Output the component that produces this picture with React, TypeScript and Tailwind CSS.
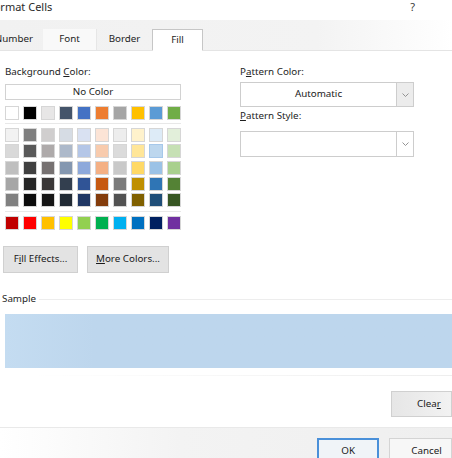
import React from 'react';

const themeRow = ['#FFFFFF', '#000000', '#E7E6E6', '#44546A', '#4472C4', '#ED7D31', '#A5A5A5', '#FFC000', '#5B9BD5', '#70AD47'];

const tintRows = [
  ['#F2F2F2', '#7F7F7F', '#D0CECE', '#D6DCE4', '#D9E1F2', '#FCE4D6', '#EDEDED', '#FFF2CC', '#DDEBF7', '#E2EFDA'],
  ['#D9D9D9', '#595959', '#AEAAAA', '#ADB9CA', '#B4C6E7', '#F8CBAD', '#DBDBDB', '#FFE699', '#BDD7EE', '#C6E0B4'],
  ['#BFBFBF', '#404040', '#767171', '#8497B0', '#8EA9DB', '#F4B084', '#C9C9C9', '#FFD966', '#9BC2E6', '#A9D08E'],
  ['#A6A6A6', '#262626', '#3B3838', '#333F4F', '#305496', '#C65911', '#7B7B7B', '#BF8F00', '#2F75B5', '#548235'],
  ['#808080', '#0D0D0D', '#161616', '#222B35', '#203764', '#833C0C', '#525252', '#806000', '#1F4E78', '#375623'],
];

const standardRow = ['#C00000', '#FF0000', '#FFC000', '#FFFF00', '#92D050', '#00B050', '#00B0F0', '#0070C0', '#002060', '#7030A0'];

const Swatch: React.FC<{ color: string; selected?: boolean }> = ({ color, selected }) => (
  <div
    className={
      selected
        ? 'w-[14px] h-[14px] border border-[#a6c8ea]'
        : 'w-[14px] h-[14px] border border-[#d6d6d6]'
    }
    style={{ backgroundColor: color }}
  />
);

const SwatchRow: React.FC<{ colors: string[]; selectedIndex?: number }> = ({ colors, selectedIndex }) => (
  <div className="flex gap-[4px]">
    {colors.map((c, i) => (
      <Swatch key={i} color={c} selected={i === selectedIndex} />
    ))}
  </div>
);

const Chevron: React.FC = () => (
  <svg width="7" height="4" viewBox="0 0 7 4" fill="none">
    <path d="M0.5 0.5 L3.5 3.5 L6.5 0.5" stroke="#888" strokeWidth="0.9" />
  </svg>
);

const Dropdown: React.FC<{ value?: string; shadedArrow?: boolean; className?: string }> = ({ value, shadedArrow, className }) => (
  <div className={'flex w-[174px] border border-[#cdcdcd] bg-white ' + (className || '')}>
    <div className="flex-1 flex items-center justify-center text-[#1a1a1a]">{value}</div>
    <div
      className={
        shadedArrow
          ? 'w-[17px] flex items-center justify-center bg-[#ececec] border-l border-[#cdcdcd]'
          : 'w-[17px] flex items-center justify-center bg-white border-l border-[#cdcdcd]'
      }
    >
      <Chevron />
    </div>
  </div>
);

const GrayButton: React.FC<{ children: React.ReactNode; className?: string }> = ({ children, className }) => (
  <div
    className={
      'flex items-center justify-center bg-[#e3e3e3] border border-[#d0d0d0] text-[#1a1a1a] ' +
      (className || '')
    }
  >
    {children}
  </div>
);

export default function App() {
  return (
    <div
      className="w-[452px] h-[458px] bg-white overflow-hidden text-[9.8px] text-[#1e1e1e] flex flex-col"
      style={{ fontFamily: '"Noto Sans", "Open Sans", sans-serif' }}
    >
      {/* Title bar */}
      <div className="shrink-0 h-[20px] flex justify-between items-start text-[11px] leading-[13px]">
        <div className="ml-[-12px] text-[#2b2b2b]">Format Cells</div>
        <div className="mr-[37px] text-[#3a3a3a]">?</div>
      </div>

      {/* Tab strip */}
      <div className="shrink-0 h-[31px] flex items-end bg-gradient-to-r from-[#f1f1f1] via-[#f3f3f3] via-70% to-white border-b border-[#e4e4e4]">
        <div className="w-[43px] h-[21px] flex items-center justify-end pr-[10px]">
          <span className="whitespace-nowrap">Number</span>
        </div>
        <div className="w-[53px] h-[21px] flex items-center justify-center bg-[#f9f9f9]">Font</div>
        <div className="w-[56px] h-[21px] flex items-center justify-center border-l border-[#e6e6e6]">Border</div>
        <div className="w-[51px] h-[22px] mb-[-1px] flex items-center justify-center bg-white border border-[#c6c6c6] border-b-white">
          Fill
        </div>
      </div>

      {/* Main area */}
      <div className="shrink-0 flex mt-[13px]">
        {/* Left column */}
        <div className="ml-[5px] w-[176px] flex flex-col">
          <div className="h-[16px] leading-[16px]">
            Background <u>C</u>olor:
          </div>
          <div className="mt-[4px] h-[16px] border border-[#d2d2d2] flex items-center justify-center">
            No Color
          </div>
          <div className="mt-[6px]">
            <SwatchRow colors={themeRow} />
          </div>
          <div className="mt-[3px] h-px bg-[#e8e8e8]" />
          <div className="mt-[4px] flex flex-col gap-[2.25px]">
            {tintRows.map((row, i) => (
              <SwatchRow key={i} colors={row} selectedIndex={i === 1 ? 8 : undefined} />
            ))}
          </div>
          <div className="mt-[4px] h-px bg-[#e8e8e8]" />
          <div className="mt-[4px]">
            <SwatchRow colors={standardRow} />
          </div>
        </div>

        {/* Right column */}
        <div className="ml-[59px] flex flex-col">
          <div className="h-[16px] leading-[16px]">
            P<u>a</u>ttern Color:
          </div>
          <Dropdown value="Automatic" shadedArrow className="mt-[2px] h-[25px]" />
          <div className="h-[16px] leading-[16px] mt-[1px]">
            <u>P</u>attern Style:
          </div>
          <Dropdown className="mt-[7px] h-[26px]" />
        </div>
      </div>

      {/* Fill Effects / More Colors */}
      <div className="shrink-0 flex gap-[9px] ml-[3px] mt-[16px]">
        <GrayButton className="w-[75px] h-[27px]">
          F<u>i</u>ll Effects...
        </GrayButton>
        <GrayButton className="w-[82px] h-[27px]">
          <u>M</u>ore Colors...
        </GrayButton>
      </div>

      {/* Sample */}
      <div className="shrink-0 flex items-center mt-[19px] h-[14px]">
        <span className="ml-[2px] mr-[3px]">Sample</span>
        <div className="flex-1 h-px bg-[#ededed]" />
      </div>
      <div className="shrink-0 ml-[5px] mt-[8px] h-[54px] bg-gradient-to-r from-[#c4dcf1] via-[#bdd6ed] via-20% to-[#bdd6ed]" />
      <div className="shrink-0 ml-[30px] mt-[7px] h-px bg-gradient-to-r from-white to-[#eeeeee]" />

      {/* Clear */}
      <div className="shrink-0 flex justify-end mt-[15px]">
        <GrayButton className="w-[61px] h-[26px] justify-start pl-[25px] bg-gradient-to-r from-[#e6e6e6] to-[#f2f2f2]">
          Clea<u>r</u>
        </GrayButton>
      </div>

      {/* Footer */}
      <div className="shrink-0 flex-1 mt-[10px] bg-gradient-to-r from-white via-[#f3f3f3] via-40% to-[#efefef] border-t border-[#e9e9e9] flex items-start pt-[10px]">
        <div className="ml-[317px] w-[73px] h-[26px] bg-[#f0f4f8] border-2 border-[#4a90d9] flex items-center justify-center text-[#1a1a1a]">
          OK
        </div>
        <div className="ml-[10px] w-[70px] h-[26px] bg-[#f7f7f7] border border-[#d4d4d4] flex items-center pl-[21px] text-[#1a1a1a]">
          Cancel
        </div>
      </div>
    </div>
  );
}
